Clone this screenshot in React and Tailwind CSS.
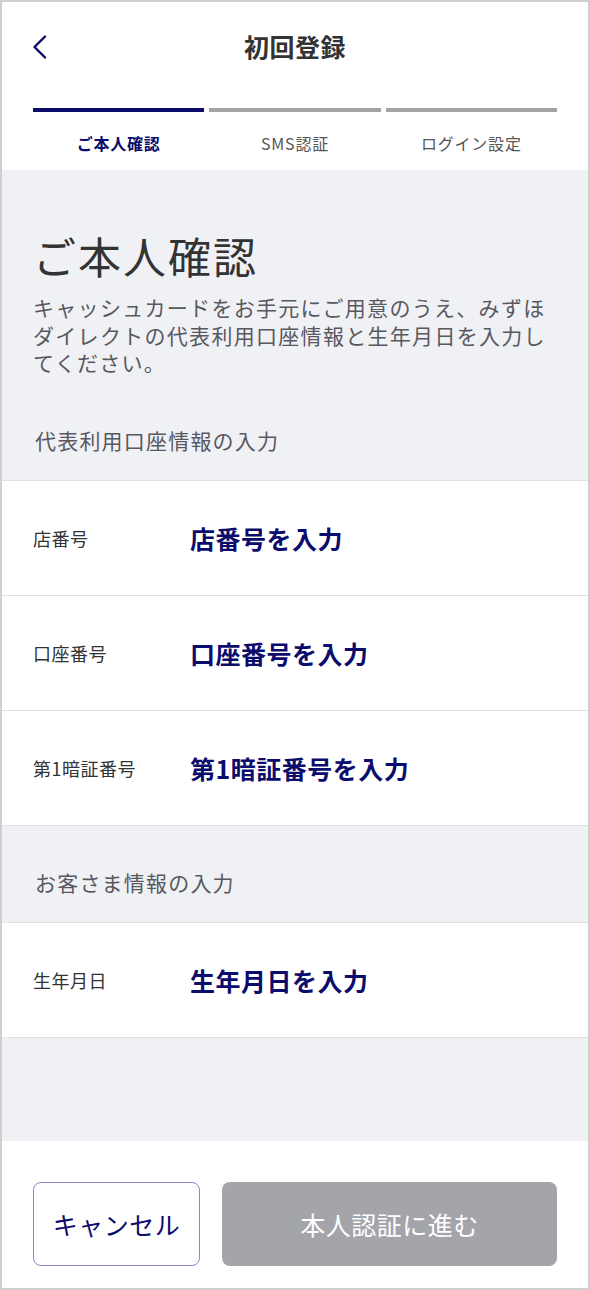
import React from "react";

const NAVY = "text-[#0b0c6b]";

function Row({ label, value }) {
  return (
    <div className="flex h-[115px] items-center border-b border-[#e1e2e8] bg-white px-[31px]">
      <div className="w-[157px] text-[18px] leading-[24px] tracking-[0.5px] text-[#333]">{label}</div>
      <div className={`text-[25px] font-bold leading-[30px] tracking-[0.5px] ${NAVY}`}>{value}</div>
    </div>
  );
}

function SectionLabel({ children }) {
  return (
    <div className="px-[33px] pt-[44px] pb-[28px] text-[21px] leading-[24px] tracking-[1.2px] text-[#58585f]">
      {children}
    </div>
  );
}

export default function App() {
  return (
    <div
      className="flex h-[1290px] w-[590px] flex-col border-2 border-[#cfcfcf] bg-[#f0f1f5]"
      style={{ fontFamily: '"Noto Sans CJK JP", "Noto Sans", sans-serif' }}
    >
      {/* Header */}
      <div className="bg-white px-[31px] pb-[17px]">
        <div className="relative flex h-[88px] items-center justify-center">
          <svg className="absolute left-0 top-[33px]" width="14" height="24" viewBox="0 0 14 24" fill="none">
            <polyline points="12,1.5 1.5,12 12,22.5" stroke="#0b0c6b" strokeWidth="2.4" strokeLinecap="round" strokeLinejoin="round" />
          </svg>
          <div className="text-[25px] font-bold leading-[30px] tracking-[0.5px] text-[#333]">初回登録</div>
        </div>
        <div className="mt-[18px] flex gap-[5px]">
          <div className="flex flex-1 flex-col items-center">
            <div className="h-[4px] w-full bg-[#0b0c6b]" />
            <div className={`mt-[21px] text-[16px] font-bold leading-[20px] tracking-[0.8px] ${NAVY}`}>ご本人確認</div>
          </div>
          <div className="flex flex-1 flex-col items-center">
            <div className="h-[4px] w-full bg-[#a4a4a8]" />
            <div className="mt-[21px] text-[16px] leading-[20px] tracking-[0.8px] text-[#555]">SMS認証</div>
          </div>
          <div className="flex flex-1 flex-col items-center">
            <div className="h-[4px] w-full bg-[#a4a4a8]" />
            <div className="mt-[21px] text-[16px] leading-[20px] tracking-[0.8px] text-[#555]">ログイン設定</div>
          </div>
        </div>
      </div>

      {/* Intro */}
      <div className="px-[31px] pt-[59px]">
        <h1 className="text-[43px] font-normal leading-[52px] tracking-[2px] text-[#333]">ご本人確認</h1>
        <p className="mt-[13px] text-[21px] leading-[27.5px] tracking-[1.3px] text-[#58585f]">
          キャッシュカードをお手元にご用意のうえ、みずほダイレクトの代表利用口座情報と生年月日を入力してください。
        </p>
      </div>
      <div className="px-[2px] pt-[51px] pb-[28px]">
        <div className="px-[31px] text-[21px] leading-[24px] tracking-[1.2px] text-[#58585f]">代表利用口座情報の入力</div>
      </div>

      <div className="border-t border-[#e1e2e8]">
        <Row label="店番号" value="店番号を入力" />
        <Row label="口座番号" value="口座番号を入力" />
        <Row label="第1暗証番号" value="第1暗証番号を入力" />
      </div>

      <SectionLabel>お客さま情報の入力</SectionLabel>
      <div className="border-t border-[#e1e2e8]">
        <Row label="生年月日" value="生年月日を入力" />
      </div>

      <div className="flex-1" />

      {/* Footer */}
      <div className="flex h-[147px] gap-[22px] bg-white px-[31px] pt-[41px]">
        <button className="flex h-[84px] w-[167px] items-center justify-center rounded-[8px] border-[1.5px] border-[#8b88c9] bg-white text-[25px] leading-[30px] tracking-[0.5px] text-[#0b0c6b]">
          キャンセル
        </button>
        <button className="flex h-[84px] flex-1 items-center justify-center rounded-[8px] bg-[#a4a5aa] text-[25px] leading-[30px] tracking-[0.5px] text-white">
          本人認証に進む
        </button>
      </div>
    </div>
  );
}
